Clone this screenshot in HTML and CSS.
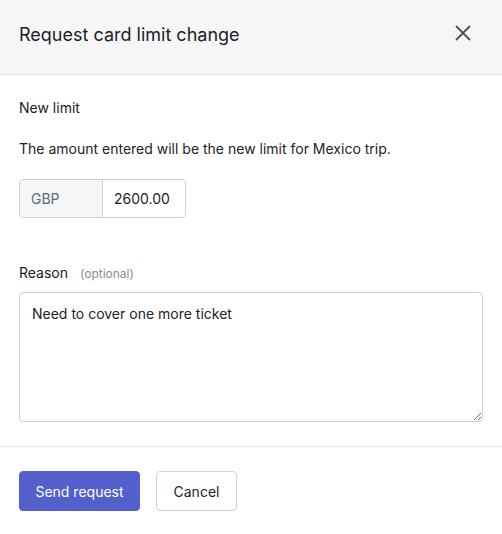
FILE: index.html
```html
<!DOCTYPE html>
<html>
<head>
<meta charset="utf-8">
<link rel="stylesheet" href="styles.css">
</head>
<body>
<div class="modal">
  <div class="header">
    <h1 class="title">Request card limit change</h1>
    <button class="close" aria-label="Close">
      <svg width="16" height="16" viewBox="0 0 16 16"><path d="M1.5 1.5L14.5 14.5M14.5 1.5L1.5 14.5" stroke="#4b5058" stroke-width="1.8" stroke-linecap="round"/></svg>
    </button>
  </div>
  <div class="body">
    <div class="label">New limit</div>
    <p class="desc">The amount entered will be the new limit for Mexico trip.</p>
    <div class="input-group">
      <span class="prefix">GBP</span>
      <span class="amount">2600.00</span>
    </div>
    <div class="label reason-label">Reason <span class="optional">(optional)</span></div>
    <textarea class="textarea">Need to cover one more ticket</textarea>
  </div>
  <div class="footer">
    <button class="btn primary">Send request</button>
    <button class="btn secondary">Cancel</button>
  </div>
</div>
</body>
</html>
```
FILE: styles.css
```css
* { box-sizing: border-box; }
body {
  margin: 0;
  font-family: Inter, "Noto Sans", sans-serif;
  color: #1f2126;
  background: #fff;
}
.modal { width: 502px; }
.header {
  height: 75px;
  background: #f5f6f8;
  border-bottom: 1px solid #e4e6ea;
  display: flex;
  align-items: center;
  justify-content: space-between;
  padding: 0 31px 0 19px;
}
.title {
  margin: 0 0 6px 0;
  font-size: 18px;
  font-weight: 400;
  color: #1f2126;
}
.close {
  border: 0;
  background: none;
  padding: 0;
  display: flex;
  margin-bottom: 8px;
}
.body {
  padding: 23px 19px 24px 19px;
  border-bottom: 1px solid #e4e6ea;
}
.label {
  font-size: 14px;
  line-height: 20px;
  font-weight: 400;
  color: #1a1c20;
}
.desc {
  margin: 21px 0 20px 0;
  font-size: 14px;
  line-height: 20px;
}
.input-group {
  display: inline-flex;
  height: 39px;
  border: 1px solid #cdd2da;
  border-radius: 4px;
  overflow: hidden;
  font-size: 14px;
}
.prefix {
  width: 83px;
  background: #f5f6f8;
  border-right: 1px solid #cdd2da;
  color: #5f6678;
  display: flex;
  align-items: center;
  padding-left: 11px;
}
.amount {
  width: 82px;
  display: flex;
  align-items: center;
  padding-left: 11px;
  color: #1f2126;
}
.reason-label {
  margin-top: 45px;
  margin-bottom: 8px;
}
.optional {
  font-size: 12px;
  font-weight: 400;
  color: #878c96;
  margin-left: 8px;
}
.textarea {
  display: block;
  width: 464px;
  height: 130px;
  border: 1px solid #cdd2da;
  border-radius: 4px;
  padding: 11px 12px;
  font-family: Inter, "Noto Sans", sans-serif;
  font-size: 14px;
  line-height: 20px;
  color: #1f2126;
  resize: vertical;
}
.footer {
  padding: 24px 19px;
  display: flex;
  gap: 16px;
}
.btn {
  height: 40px;
  border-radius: 4px;
  font-family: Inter, "Noto Sans", sans-serif;
  font-size: 14px;
  padding: 0;
  white-space: nowrap;
}
.primary {
  background: #535fcb;
  color: #fff;
  border: 1px solid #535fcb;
  width: 121px;
}
.secondary {
  background: #fff;
  color: #1f2126;
  border: 1px solid #cdd2da;
  width: 81px;
}
```
